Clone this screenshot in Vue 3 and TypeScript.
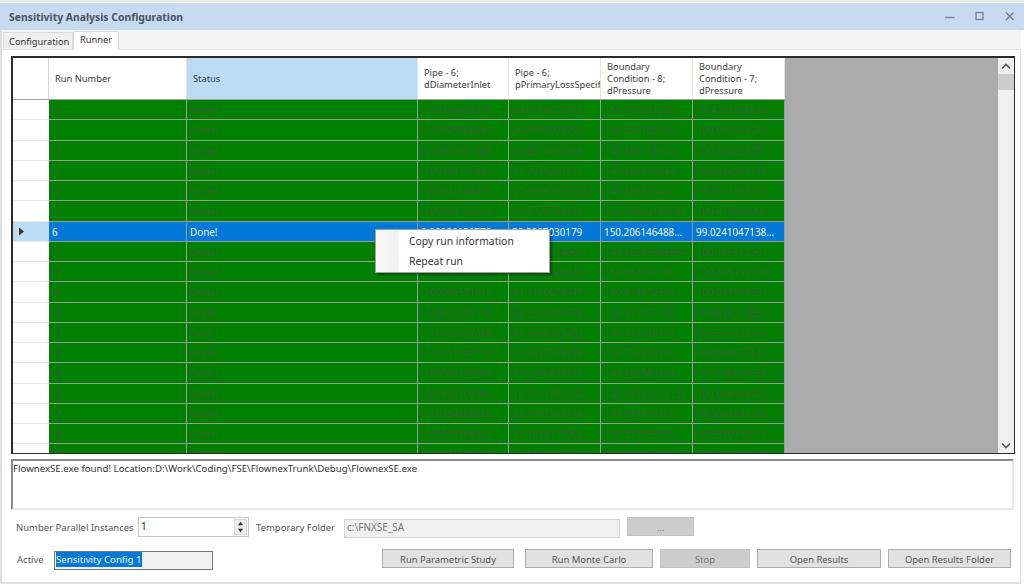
<script setup lang="ts">
const headers = [
  { label: 'Run Number', cls: '' },
  { label: 'Status', cls: 'active' },
  { label: 'Pipe - 6;\ndDiameterInlet', cls: '' },
  { label: 'Pipe - 6;\npPrimaryLossSpecif', cls: 'clip' },
  { label: 'Boundary\nCondition - 8;\ndPressure', cls: '' },
  { label: 'Boundary\nCondition - 7;\ndPressure', cls: '' },
]
const data: string[][] = [
  ['0.10496928378…', '38.0158075313…', '150.155021255…', '99.4251658824…'],
  ['0.10045866689…', '26.4963009792…', '150.296702124…', '100.063469243…'],
  ['0.10000397908…', '20.8674955319…', '149.509118514…', '100.300233797…'],
  ['0.09958175861…', '37.7855261271…', '149.269815049…', '99.6624369159…'],
  ['0.09871548479…', '37.699638759353', '149.885578472…', '99.3551259729…'],
  ['0.09504763212…', '13.8722786159…', '150.54862183682', '100.479603906…'],
  ['0.09996050779…', '39.3887030179', '150.206146488…', '99.0241047138…'],
  ['0.09788153206…', '22.6471214865…', '149.62503905854', '100.139517261…'],
  ['0.09391502883…', '34.8367849249…', '150.254781178…', '100.5551351599'],
  ['0.09086571619…', '31.1166673947…', '150.614612315…', '100.587979291…'],
  ['0.10632307110…', '28.2569415976…', '150.911707193…', '99.8828212835…'],
  ['0.10102857088…', '45.3568903463…', '150.413246414…', '99.3797231353…'],
  ['0.10511940724…', '16.5337059188…', '150.756838794…', '99.8288673542…'],
  ['0.09536190204…', '37.2286400175…', '149.662580264…', '99.7238620656…'],
  ['0.09832705964…', '16.7621992094…', '149.25783623123', '100.008554742…'],
  ['0.10764669650…', '23.7761162718…', '149.657579165…', '99.9081845126…'],
  ['0.09753566962…', '33.1024117066…', '150.273683830…', '99.8550733615…'],
  ['0.10241548027…', '21.5498542336…', '150.479855164…', '99.9466283384…'],
]
const buttons = [
  { label: 'Run Parametric Study', cls: 'b1' },
  { label: 'Run Monte Carlo', cls: 'b2' },
  { label: 'Stop', cls: 'b3 off' },
  { label: 'Open Results', cls: 'b4' },
  { label: 'Open Results Folder', cls: 'b5' },
]
</script>

<template>
  <div class="window">
    <header class="titlebar">
      <span class="title">Sensitivity Analysis Configuration</span>
      <div class="controls">
        <svg width="12" height="12" viewBox="0 0 12 12"><path d="M1 6.5h9.5" stroke="#8b8f96" stroke-width="1.6" /></svg>
        <svg width="12" height="12" viewBox="0 0 12 12"><rect x="2" y="1.5" width="7" height="7" fill="none" stroke="#777b82" stroke-width="1.2" /></svg>
        <svg width="12" height="12" viewBox="0 0 12 12"><path d="M2 1.5l7.5 7.5M9.5 1.5L2 9" stroke="#777b82" stroke-width="1.4" /></svg>
      </div>
    </header>

    <nav class="tabs">
      <span class="tab">Configuration</span>
      <span class="tab current">Runner</span>
    </nav>

    <main class="page">
      <section class="grid">
        <div class="table">
          <div class="row head">
            <div class="rh"></div>
            <div v-for="h in headers" :key="h.label" class="hc" :class="h.cls">{{ h.label }}</div>
          </div>
          <div class="rows">
            <div v-for="(r, i) in data" :key="i" class="row" :class="{ sel: i === 6 }">
              <div class="rh">
                <svg v-if="i === 6" width="7" height="9" viewBox="0 0 7 9"><path d="M1 0.5l5 4-5 4z" fill="#333" /></svg>
              </div>
              <div class="c first">{{ i }}</div>
              <div class="c status">Done!</div>
              <div v-for="(v, j) in r" :key="j" class="c">{{ v }}</div>
            </div>
          </div>
          <div class="menu">
            <div class="item">Copy run information</div>
            <div class="item">Repeat run</div>
          </div>
        </div>
        <aside class="scroll">
          <svg class="up" width="10" height="7" viewBox="0 0 10 7"><path d="M1 5.5l4-4 4 4" fill="none" stroke="#555" stroke-width="1.6" /></svg>
          <div class="thumb"></div>
          <svg class="down" width="10" height="7" viewBox="0 0 10 7"><path d="M1 1.5l4 4 4-4" fill="none" stroke="#555" stroke-width="1.6" /></svg>
        </aside>
      </section>

      <section class="log">FlownexSE.exe found! Location:D:\Work\Coding\FSE\FlownexTrunk\Debug\FlownexSE.exe</section>

      <section class="line one">
        <label class="lbl l1">Number Parallel Instances</label>
        <div class="spin">
          <span class="val">1</span>
          <div class="arrows">
            <svg width="9" height="8" viewBox="0 0 9 8"><path d="M4.5 2l3 4h-6z" fill="#333" /></svg>
            <svg width="9" height="8" viewBox="0 0 9 8"><path d="M4.5 6l3-4h-6z" fill="#333" /></svg>
          </div>
        </div>
        <label class="lbl l2">Temporary Folder</label>
        <div class="folder">c:\FNXSE_SA</div>
        <div class="btn off dots">...</div>
      </section>

      <section class="line two">
        <label class="lbl l3">Active</label>
        <div class="active-box"><span class="hl">Sensitivity Config 1</span></div>
        <div class="btns">
          <div v-for="b in buttons" :key="b.label" class="btn" :class="b.cls">{{ b.label }}</div>
        </div>
      </section>
    </main>
  </div>
</template>

<style scoped>
.window {
  width: 1024px;
  height: 584px;
  box-sizing: border-box;
  padding-top: 3px;
  display: flex;
  flex-direction: column;
  overflow: hidden;
  background: #fff;
  font-family: "Noto Sans", "Liberation Sans", sans-serif;
  font-size: 9.3px;
  color: #444;
  box-shadow: inset 0 2px 0 #ececec;
}
.titlebar {
  height: 27px;
  flex: none;
  display: flex;
  align-items: center;
  justify-content: space-between;
  background: #c6daf2;
  padding: 0 8px 0 9px;
}
.title {
  font-weight: 700;
  font-size: 10.4px;
  color: #4a5460;
}
.controls {
  display: flex;
  gap: 18px;
}
.tabs {
  height: 20px;
  flex: none;
  display: flex;
  align-items: flex-end;
  box-sizing: border-box;
  padding-left: 3px;
  margin-right: 3px;
  background: #f3f3f3;
  border-left: 2px solid #dedede;
  border-bottom: 1px solid #e4e4e4;
}
.tab {
  height: 17px;
  line-height: 17px;
  padding: 0 5px;
  box-sizing: border-box;
  width: 70px;
  margin-left: -2px;
  border: 1px solid #dcdcdc;
  border-bottom: 0;
  background: #f0f0f0;
  color: #333;
}
.tab.current {
  width: 46px;
  height: 19px;
  margin-left: 0;
  margin-bottom: -1px;
  background: #fff;
  padding: 0 6px;
  line-height: 16px;
}
.page {
  flex: 1;
  min-height: 0;
  box-sizing: border-box;
  padding: 6px 0 0 9px;
  margin-right: 3px;
  border-left: 2px solid #dedede;
  border-right: 1px solid #e0e0e0;
  border-bottom: 2px solid #e0e0e0;
  background: #fff;
  display: flex;
  flex-direction: column;
}
.grid {
  width: 1004px;
  height: 398px;
  flex: none;
  box-sizing: border-box;
  border: 2px solid #2a2a2a;
  border-right-width: 1px;
  border-bottom-width: 1px;
  display: flex;
  background: #ababab;
}
.table {
  flex: 1;
  position: relative;
  overflow: hidden;
}
.row {
  display: grid;
  grid-template-columns: 36px 138px 231px 91px 92px 92px 92px;
  width: 772px;
  height: 20.25px;
  box-sizing: border-box;
}
.row.head {
  height: 42px;
  background: #fff;
  border-bottom: 1px solid #a0a0a0;
}
.rows .rh {
  background: #fff;
  border-bottom: 1px solid #e8e8e8;
  display: flex;
  align-items: center;
  padding-left: 5px;
  box-sizing: border-box;
}
.head .rh {
  background: #fff;
  border-right: 1px solid #d8d8d8;
}
.hc {
  white-space: pre-line;
  display: flex;
  align-items: center;
  padding: 1px 0 0 6px;
  box-sizing: border-box;
  border-right: 1px solid #e4e4e4;
  line-height: 12px;
  color: #3c3c3c;
  overflow: hidden;
}
.hc.active {
  background: #bbdcf4;
}
.hc.clip {
  white-space: pre;
}
.c {
  background: #008000;
  color: #3a5f3a;
  border-right: 1px solid #9a9a9a;
  border-bottom: 1px solid #9a9a9a;
  box-sizing: border-box;
  padding-left: 3px;
  line-height: 20px;
  white-space: nowrap;
  overflow: hidden;
  font-size: 9.85px;
}
.sel .rh {
  background: #bcdcf4;
}
.sel .c {
  background: #0078d7;
  color: #f2f8fd;
}
.menu {
  position: absolute;
  left: 362px;
  top: 171px;
  width: 175px;
  height: 44px;
  box-sizing: border-box;
  padding-top: 1px;
  background: linear-gradient(90deg, #f8f8f8 0, #f0f0f0 22px, #fff 23px);
  border: 1px solid #a0a0a0;
  box-shadow: 2px 2px 2px rgba(0, 0, 0, 0.35);
  color: #333;
}
.item {
  height: 20px;
  line-height: 20px;
  padding-left: 33px;
  font-size: 10.4px;
}
.scroll {
  width: 16px;
  flex: none;
  background: #f0f0f0;
  display: flex;
  flex-direction: column;
  align-items: center;
}
.up {
  margin-top: 5px;
}
.thumb {
  width: 16px;
  height: 16px;
  margin-top: 4px;
  background: #cdcdcd;
}
.down {
  margin-top: auto;
  margin-bottom: 4px;
}
.log {
  width: 1003px;
  height: 51px;
  flex: none;
  margin-top: 5px;
  box-sizing: border-box;
  border: 2px solid #e8e8e8;
  border-top-color: #8a8a8a;
  border-left-color: #8a8a8a;
  padding: 1px 0 0 0;
  line-height: 14px;
  color: #333;
  font-size: 9.67px;
}
.line {
  display: flex;
  align-items: flex-start;
  flex: none;
}
.line.one {
  margin-top: 7px;
  height: 21px;
  padding-left: 5px;
}
.line.two {
  margin-top: 11px;
  height: 21px;
  padding-left: 6px;
}
.lbl {
  color: #555;
  font-size: 9.5px;
  white-space: nowrap;
  line-height: 14px;
  margin-top: 4px;
}
.l1 {
  width: 122px;
}
.spin {
  width: 111px;
  height: 20px;
  box-sizing: border-box;
  border: 1px solid #c4c4c4;
  display: flex;
  justify-content: space-between;
  align-items: flex-start;
  background: #fff;
  color: #222;
  font-size: 10px;
}
.val {
  padding: 1px 0 0 2px;
}
.arrows {
  width: 13px;
  height: 16px;
  margin: 1px 1px 0 0;
  background: #eee;
  display: flex;
  flex-direction: column;
  align-items: center;
  border: 1px solid #d8d8d8;
  box-sizing: border-box;
}
.arrows svg {
  height: 7px;
}
.l2 {
  margin-left: 7px;
  width: 88px;
}
.folder {
  width: 276px;
  height: 19px;
  box-sizing: border-box;
  border: 1px solid #d4d4d4;
  background: #f0f0f0;
  color: #777;
  line-height: 15px;
  padding-left: 2px;
  margin-top: 2px;
  font-size: 10px;
}
.btn {
  height: 19px;
  line-height: 19px;
  box-sizing: border-box;
  text-align: center;
  background: #e1e1e1;
  border: 1px solid #adadad;
  color: #555;
  font-size: 9.45px;
}
.btn.off {
  background: #cccccc;
  border-color: #c4c4c4;
  color: #777;
}
.dots {
  width: 67px;
  margin-left: 7px;
}
.l3 {
  width: 37px;
}
.active-box {
  width: 159px;
  height: 19px;
  box-sizing: border-box;
  border: 1px solid #777;
  border-width: 1px 1.5px 1.5px 1.5px;
  background: #f0f0f0;
  line-height: 16px;
  padding-left: 1px;
  margin-top: 2px;
}
.hl {
  background: #0078d7;
  color: #f4f9fd;
  font-size: 9.65px;
  display: inline-block;
  line-height: 15px;
}
.btns {
  display: flex;
  margin-left: 169px;
}
.b1 { width: 132px; }
.b2 { width: 128px; margin-left: 11px; }
.b3 { width: 90px; margin-left: 7px; }
.b4 { width: 124px; margin-left: 7px; }
.b5 { width: 123px; margin-left: 7px; }
</style>
